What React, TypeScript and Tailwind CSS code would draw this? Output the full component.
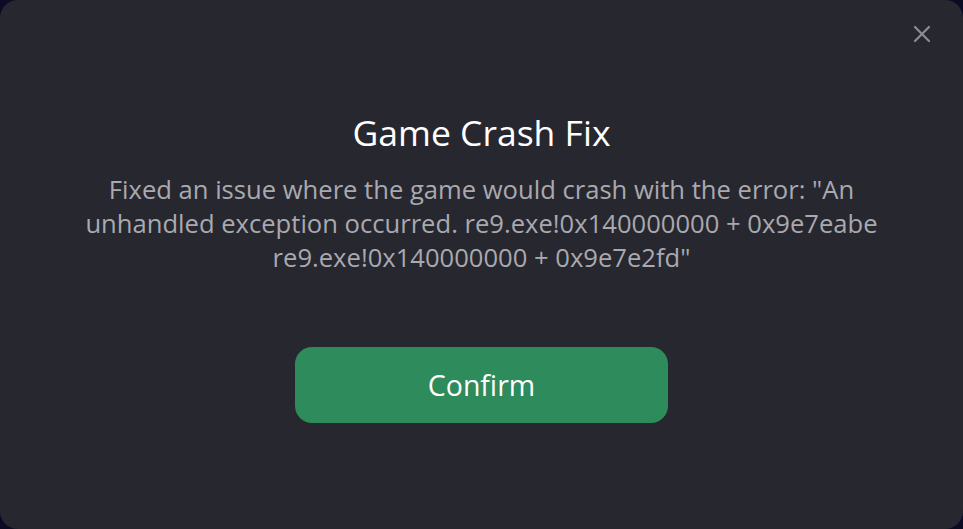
import { X } from 'lucide-react'

export default function App() {
  return (
    <div className="w-[963px] h-[529px] bg-[#0b0b24] overflow-hidden">
      <div
        className="relative w-full h-full bg-[#27272f] rounded-[18px] flex flex-col items-center"
        style={{ fontFamily: '"Open Sans", "Noto Sans", sans-serif' }}
      >
        <button className="absolute top-[20px] right-[27px] text-[#8b8b91]">
          <X className="w-[28px] h-[28px]" strokeWidth={1.9} />
        </button>

        <h1 className="mt-[108px] text-[35.5px] leading-[48px] text-white">Game Crash Fix</h1>

        <p className="mt-[17px] w-[830px] text-center text-[25.6px] leading-[34px] text-[#a9a9b0]">
          Fixed an issue where the game would crash with the error: "An unhandled exception occurred.
          re9.exe!0x140000000 + 0x9e7eabe re9.exe!0x140000000 + 0x9e7e2fd"
        </p>

        <button className="mt-[72px] w-[373px] h-[76px] rounded-[17px] bg-[#2e8b5b] text-white text-[28.5px]">
          Confirm
        </button>
      </div>
    </div>
  )
}
